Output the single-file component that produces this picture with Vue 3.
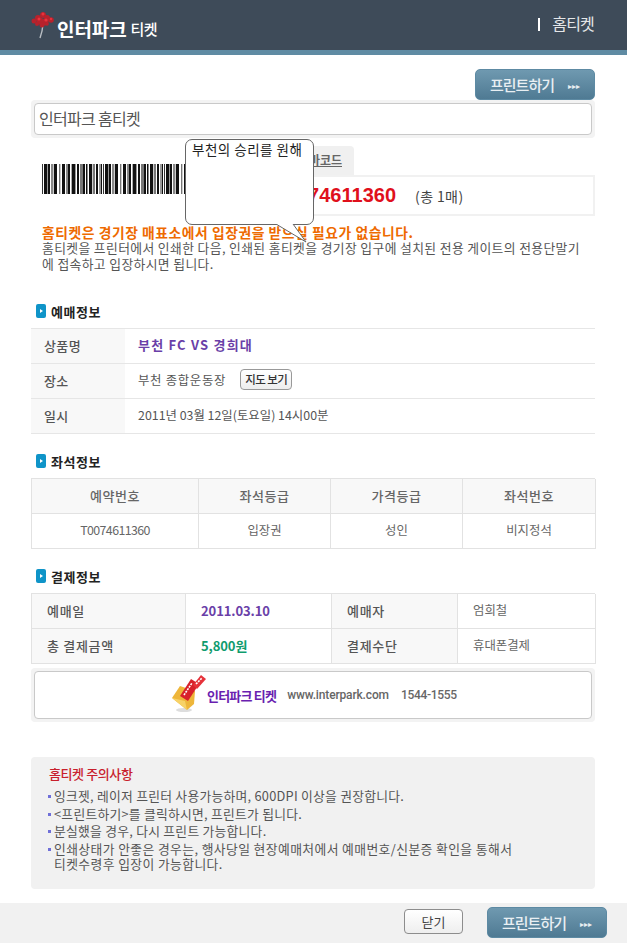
<script setup>
const unit = [
  [1,'#333'],[1,'#fff'],[3,'#111'],[1,'#999'],[2,'#111'],[1,'#fff'],[2,'#888'],[1,'#ccc'],[3,'#111'],[2,'#fff'],[1,'#777'],[1,'#ccc'],[1,'#fff'],[3,'#111'],[1,'#fff'],[2,'#888'],[2,'#111'],[1,'#fff'],[1,'#aaa'],[3,'#111'],[1,'#999'],[1,'#fff'],[2,'#111'],[1,'#fff'],[3,'#777'],[2,'#111'],[1,'#fff'],[1,'#111'],[1,'#888'],[1,'#fff'],[3,'#111'],[1,'#ccc'],[2,'#777'],[1,'#fff'],[2,'#111'],[1,'#fff'],[2,'#999'],[1,'#111'],[1,'#fff']
]
const bars = [...unit, ...unit, ...unit]
const buying = [
  { label: '상품명', value: '부천 FC VS 경희대', cls: 'purple' },
  { label: '장소', value: '부천 종합운동장', cls: 'place', map: true },
  { label: '일시', value: '2011년 03월 12일(토요일) 14시00분', cls: 'date' }
]
const seatHead = ['예약번호', '좌석등급', '가격등급', '좌석번호']
const seatBody = ['T0074611360', '입장권', '성인', '비지정석']
const notes = [
  ['잉크젯, 레이저 프린터 사용가능하며, 600DPI 이상을 권장합니다.'],
  ['<프린트하기>를 클릭하시면, 프린트가 됩니다.'],
  ['분실했을 경우, 다시 프린트 가능합니다.'],
  ['인쇄상태가 안좋은 경우는, 행사당일 현장예매처에서 예매번호/신분증 확인을 통해서', '티켓수령후 입장이 가능합니다.']
]
</script>

<template>
  <div class="page">
    <header class="top">
      <div class="logo">
        <svg class="tree" width="26" height="30" viewBox="0 0 26 30">
          <path d="M13 14 C12.6 20 11.5 24 10 28" stroke="#b9bec4" stroke-width="1.4" fill="none" />
          <g fill="#b8222c">
            <circle cx="13" cy="5" r="3" />
            <circle cx="8" cy="8" r="3" />
            <circle cx="17" cy="8" r="3" />
            <circle cx="4" cy="11" r="2.5" />
            <circle cx="10" cy="11" r="3.5" />
            <circle cx="15" cy="12" r="3.5" />
            <circle cx="21" cy="10" r="2.8" />
            <circle cx="12" cy="15" r="2.5" />
            <circle cx="17" cy="14" r="1.8" />
            <circle cx="7" cy="14" r="2" />
          </g>
          <g fill="#e8323c">
            <circle cx="13" cy="4" r="1.5" />
            <circle cx="9" cy="9" r="1.5" />
            <circle cx="16" cy="10" r="1.6" />
            <circle cx="21" cy="9" r="1.2" />
          </g>
        </svg>
        <span class="logo-main">인터파크</span><span class="logo-sub">티켓</span>
      </div>
      <div class="top-title">홈티켓</div>
    </header>
    <div class="stripe"></div>

    <main class="content">
      <div class="print-row">
        <button class="print">프린트하기<span class="dots">▸▸▸</span></button>
      </div>
      <div class="frame title-frame"><div class="frame-in title-in">인터파크 홈티켓</div></div>

      <section class="ticket">
        <div class="barcode-zone">
          <div class="barcode">
            <i v-for="(b, i) in bars" :key="i" :style="{ width: b[0] + 'px', background: b[1] }"></i>
          </div>
          <div class="code-side">
            <div class="tab">바코드</div>
            <div class="number"><b>T0074611360</b><span>(총 1매)</span></div>
          </div>
        </div>
        <div class="bubble">
          <span>부천의 승리를 원해</span>
          <svg class="tail" width="34" height="22" viewBox="0 0 34 22">
            <path d="M1 0 L31 18 L18 0" fill="#fff" />
            <path d="M1 0 L31 18 L18 0" fill="none" stroke="#666" />
          </svg>
        </div>
        <p class="warn">홈티켓은 경기장 매표소에서 입장권을 받으실 필요가 없습니다.</p>
        <p class="desc">홈티켓을 프린터에서 인쇄한 다음, 인쇄된 홈티켓을 경기장 입구에 설치된 전용 게이트의 전용단말기<br />에 접속하고 입장하시면 됩니다.</p>
      </section>

      <h2 class="head first"><i class="mark"></i>예매정보</h2>
      <div class="info">
        <div v-for="r in buying" :key="r.label" class="info-row">
          <div class="info-label">{{ r.label }}</div>
          <div class="info-val" :class="r.cls">{{ r.value }}<button v-if="r.map" class="map">지도 보기</button></div>
        </div>
      </div>

      <h2 class="head"><i class="mark"></i>좌석정보</h2>
      <div class="seat">
        <div v-for="h in seatHead" :key="h" class="seat-h">{{ h }}</div>
        <div v-for="c in seatBody" :key="c" class="seat-c">{{ c }}</div>
      </div>

      <h2 class="head"><i class="mark"></i>결제정보</h2>
      <div class="pay">
        <div class="pay-l">예매일</div>
        <div class="pay-v purple">2011.03.10</div>
        <div class="pay-l">예매자</div>
        <div class="pay-v">엄희철</div>
        <div class="pay-l">총 결제금액</div>
        <div class="pay-v green">5,800원</div>
        <div class="pay-l">결제수단</div>
        <div class="pay-v">휴대폰결제</div>
      </div>

      <div class="frame banner-frame">
        <div class="frame-in banner">
          <svg class="env" width="36" height="40" viewBox="0 0 36 40">
            <ellipse cx="13" cy="36" rx="8" ry="2" fill="#ddd" />
            <path d="M1 24 L9 12 L24 17 L23 30 L16 36 Z" fill="#eeb63a" />
            <path d="M1 24 L14 27 L16 36 Z" fill="#f7d267" />
            <path d="M9 22 L20 5 L28 10 L17 27 Z" fill="#d8212b" />
            <path d="M22 11 L30 1 L35 5 L26 15 Z" fill="#e6323a" />
            <path d="M13 21 L21 9 M25 10 L31 4" stroke="#fff" stroke-width="1.6" stroke-dasharray="2 1" />
          </svg>
          <span class="b-name">인터파크 티켓</span>
          <span class="b-url">www.interpark.com</span>
          <span class="b-tel">1544-1555</span>
        </div>
      </div>

      <section class="notes">
        <h3>홈티켓 주의사항</h3>
        <ul>
          <li v-for="(n, i) in notes" :key="i"><template v-for="(l, j) in n" :key="j"><br v-if="j" />{{ l }}</template></li>
        </ul>
      </section>
    </main>

    <footer class="foot">
      <button class="close">닫기</button>
      <button class="print">프린트하기<span class="dots">▸▸▸</span></button>
    </footer>
  </div>
</template>

<style scoped>
* { box-sizing: border-box; }
.page {
  width: 627px;
  height: 943px;
  overflow: hidden;
  background: #fff;
  color: #555;
  font: 12px "Noto Sans CJK KR", "Noto Sans", sans-serif;
  display: flex;
  flex-direction: column;
}
.top {
  flex: none;
  height: 50px;
  background: #3e4b59;
  display: flex;
  justify-content: space-between;
  padding: 0 33px 0 30px;
}
.logo { display: flex; align-items: center; height: 50px; color: #fff; position: relative; }
.tree { margin: 0 1px 0 0; }
.logo-main { font-size: 19px; font-weight: 700; letter-spacing: -0.1px; margin-top: 7px; }
.logo-sub { font-size: 15px; font-weight: 500; margin: 7px 0 0 4px; letter-spacing: -0.5px; }
.top-title {
  margin-top: 14px;
  height: 19px;
  font-size: 16px;
  line-height: 19px;
  color: #e4e6e8;
  letter-spacing: -0.8px;
}
.top-title::before {
  content: "";
  display: inline-block;
  width: 2px;
  height: 13px;
  background: #fff;
  margin-right: 12px;
  vertical-align: -1px;
}
.stripe { flex: none; height: 5px; background: #5f8ba3; }
.content { flex: 1; padding: 14px 32px 0 31px; }
.print-row { display: flex; justify-content: flex-end; height: 31px; }
button { font-family: inherit; padding: 0; cursor: pointer; }
.print {
  width: 120px;
  height: 31px;
  border: 1px solid #5d8aa3;
  border-radius: 5px;
  background: linear-gradient(#6f99b0, #4f7a93);
  color: #e9eff3;
  font-size: 15px;
  font-weight: 500;
  letter-spacing: -1px;
}
.dots { font-size: 8px; margin-left: 14px; letter-spacing: 0; vertical-align: 2px; }
.frame { background: #f3f3f3; padding: 3px; border-radius: 4px; }
.frame-in { background: #fff; border: 1px solid #c9c9c9; border-radius: 4px; }
.title-frame { height: 38px; }
.title-in { height: 32px; line-height: 29px; padding-left: 4px; font-size: 16px; color: #555; letter-spacing: -0.7px; }

.ticket { position: relative; height: 135px; padding: 0 11px; }
.barcode-zone { position: relative; height: 86px; }
.barcode { position: absolute; left: 0; top: 26px; height: 30px; display: flex; }
.barcode i { display: block; height: 30px; flex: none; }
.code-side { position: absolute; left: 180px; right: -11px; top: 8px; }
.tab {
  width: 120px;
  height: 29px;
  margin-left: 12px;
  background: #f0f0f0;
  border-radius: 4px 4px 0 0;
  text-align: right;
  padding-right: 12px;
  line-height: 27px;
  font-weight: 700;
  color: #666;
  text-decoration: underline;
}
.number {
  height: 41px;
  border: 2px solid #f1f1f1;
  display: flex;
  align-items: center;
  padding-left: 12px;
}
.number b { color: #e0101c; font: 700 20px "Liberation Sans", sans-serif; width: 160px; flex: none; text-align: right; white-space: nowrap; direction: rtl; unicode-bidi: plaintext; }
.number span { margin-left: 19px; font-size: 14px; color: #444; letter-spacing: 0.4px; }
.bubble {
  position: absolute;
  left: 154px;
  top: 1px;
  width: 129px;
  height: 86px;
  background: #fff;
  border: 1px solid #666;
  border-radius: 7px;
  padding: 0 6px;
  font-size: 13.5px;
  line-height: 19px;
  letter-spacing: 0.5px;
  white-space: nowrap;
  color: #222;
}
.tail { position: absolute; left: 89px; top: 84px; }
.warn { margin: 0; font-size: 13.8px; font-weight: 700; line-height: 16px; color: #ee6a00; letter-spacing: 0.55px; }
.desc { margin: 0; font-size: 12.8px; line-height: 16px; color: #555; letter-spacing: 0.38px; }

.head {
  margin: 0;
  display: flex;
  align-items: center;
  gap: 5px;
  height: 18px;
  padding-left: 5px;
  font-size: 13px;
  font-weight: 700;
  color: #222;
  letter-spacing: 0.5px;
}
.head.first { margin-top: 29px; }
.mark {
  width: 10px;
  height: 14px;
  border-radius: 2px;
  background: #0f94c8;
  position: relative;
}
.mark::after {
  content: "";
  position: absolute;
  left: 4px;
  top: 5px;
  border-left: 3px solid #fff;
  border-top: 2px solid transparent;
  border-bottom: 2px solid transparent;
}
.info { margin: 8px 0 18px; border-top: 1px solid #e6e6e6; }
.info-row { display: flex; height: 35px; border-bottom: 1px solid #e6e6e6; }
.info-label {
  width: 94px;
  background: #f8f8f8;
  padding-left: 13px;
  line-height: 33px;
  font-size: 13px;
  font-weight: 500;
  color: #555;
  letter-spacing: 0.4px;
}
.info-val { padding-left: 13px; line-height: 32px; color: #555; font-size: 12.4px; }
.info-val.place { letter-spacing: 0.7px; }
.info-val.date { letter-spacing: 0; }
.info-val.purple { font-size: 13px; font-weight: 700; letter-spacing: 1.2px; }
.purple { color: #6a3fa8; }
.green { color: #109c6e; }
.map {
  width: 52px;
  height: 21px;
  margin-left: 14px;
  border: 1px solid #999;
  border-radius: 4px;
  background: linear-gradient(#fff, #ededed);
  font-size: 11.5px;
  font-weight: 500;
  color: #333;
  letter-spacing: -0.6px;
  vertical-align: 1px;
}
.seat, .pay {
  display: grid;
  grid-auto-rows: 35px;
  margin-top: 8px;
  border-top: 1px solid #e2e2e2;
  border-left: 1px solid #e2e2e2;
}
.seat { grid-template-columns: 167px 132px 132px 133px; margin-bottom: 18px; }
.pay { grid-template-columns: 154px 146px 126px 138px; margin-bottom: 4px; }
.seat > div, .pay > div {
  border-right: 1px solid #e2e2e2;
  border-bottom: 1px solid #e2e2e2;
  line-height: 33px;
}
.seat-h { background: #f8f8f8; text-align: center; font-size: 13px; font-weight: 500; color: #666; letter-spacing: 0.5px; }
.seat-c { text-align: center; color: #666; font-size: 12.4px; }
.seat-c:nth-child(5) { letter-spacing: -0.6px; }
.pay-l { background: #f8f8f8; padding-left: 15px; font-size: 13px; font-weight: 500; color: #555; letter-spacing: 0.7px; }
.pay-v { padding-left: 15px; font-size: 12.4px; color: #666; }
.pay-v.purple, .pay-v.green { font-size: 13px; font-weight: 700; letter-spacing: -0.1px; }
.pay-v.purple { color: #6a3fa8; }
.pay-v.green { color: #109c6e; }
.banner-frame { height: 54px; }
.banner {
  height: 48px;
  display: flex;
  align-items: center;
  padding-left: 136px;
}
.env { margin: -2px 0 0 0; }
.b-name { font-size: 13px; font-weight: 700; color: #6a1fb0; letter-spacing: -0.8px; }
.b-url { font: 500 12px "Roboto", sans-serif; color: #666; margin-left: 11px; letter-spacing: -0.15px; }
.b-tel { font: 500 12px "Roboto", sans-serif; color: #666; margin-left: 12px; letter-spacing: -0.3px; }

.notes {
  margin-top: 35px;
  height: 132px;
  background: #f1f1f1;
  border-radius: 4px;
  padding: 8px 0 0 18px;
}
.notes h3 { margin: 0 0 5px; font-size: 13px; line-height: 18px; font-weight: 500; color: #c8202c; letter-spacing: -0.4px; }
.notes ul { margin: 0; padding: 0; list-style: none; }
.notes li { position: relative; font-size: 12.8px; line-height: 15px; padding-left: 5px; margin-bottom: 2.5px; color: #555; letter-spacing: 0.25px; }
.notes li:last-child { letter-spacing: 0.4px; }
.notes li::before {
  content: "";
  position: absolute;
  left: -1px;
  top: 7px;
  width: 3px;
  height: 3px;
  background: #6f6fd8;
}
.foot {
  flex: none;
  height: 40px;
  background: #f1f1f1;
  padding: 4px 20px 0 0;
  display: flex;
  justify-content: flex-end;
  align-items: flex-start;
}
.close {
  width: 59px;
  height: 25px;
  margin: 2px 24px 0 0;
  border: 1px solid #8d8d8d;
  border-radius: 4px;
  background: linear-gradient(#fff, #eee);
  font-size: 13px;
  color: #444;
}
</style>
